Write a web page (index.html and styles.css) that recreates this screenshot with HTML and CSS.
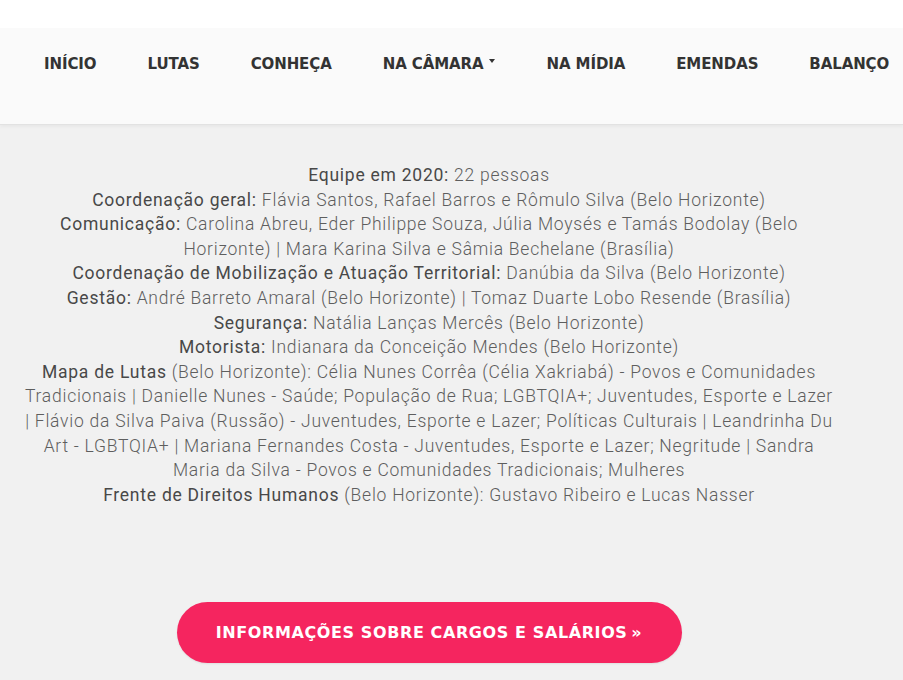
FILE: index.html
```html
<!DOCTYPE html>
<html lang="pt-BR">
<head>
<meta charset="utf-8">
<title>Equipe</title>
<link rel="stylesheet" href="styles.css">
</head>
<body>
<div class="topband"></div>
<header class="navbar">
  <nav class="menu">
    <a class="menu-item" href="#">INÍCIO</a>
    <a class="menu-item" href="#">LUTAS</a>
    <a class="menu-item" href="#">CONHEÇA</a>
    <a class="menu-item dropdown" href="#">NA CÂMARA<span class="caret"></span></a>
    <a class="menu-item" href="#">NA MÍDIA</a>
    <a class="menu-item" href="#">EMENDAS</a>
    <a class="menu-item" href="#">BALANÇO</a>
  </nav>
</header>
<main class="main">
  <div class="team">
    <p><strong>Equipe em 2020:</strong> 22 pessoas</p>
    <p><strong>Coordenação geral:</strong> Flávia Santos, Rafael Barros e Rômulo Silva (Belo Horizonte)</p>
    <p><strong>Comunicação:</strong> Carolina Abreu, Eder Philippe Souza, Júlia Moysés e Tamás Bodolay (Belo<br>Horizonte) | Mara Karina Silva e Sâmia Bechelane (Brasília)</p>
    <p><strong>Coordenação de Mobilização e Atuação Territorial:</strong> Danúbia da Silva (Belo Horizonte)</p>
    <p><strong>Gestão:</strong> André Barreto Amaral (Belo Horizonte) | Tomaz Duarte Lobo Resende (Brasília)</p>
    <p><strong>Segurança:</strong> Natália Lanças Mercês (Belo Horizonte)</p>
    <p><strong>Motorista:</strong> Indianara da Conceição Mendes (Belo Horizonte)</p>
    <p><strong>Mapa de Lutas</strong> (Belo Horizonte): Célia Nunes Corrêa (Célia Xakriabá) - Povos e Comunidades<br>Tradicionais | Danielle Nunes - Saúde; População de Rua; LGBTQIA+; Juventudes, Esporte e Lazer<br>| Flávio da Silva Paiva (Russão) - Juventudes, Esporte e Lazer; Políticas Culturais | Leandrinha Du<br>Art - LGBTQIA+ | Mariana Fernandes Costa - Juventudes, Esporte e Lazer; Negritude | Sandra<br>Maria da Silva - Povos e Comunidades Tradicionais; Mulheres</p>
    <p><strong>Frente de Direitos Humanos</strong> (Belo Horizonte): Gustavo Ribeiro e Lucas Nasser</p>
  </div>
  <div class="actions">
    <a class="btn" href="#">INFORMAÇÕES SOBRE CARGOS E SALÁRIOS&thinsp;»</a>
  </div>
</main>
</body>
</html>
```

FILE: styles.css
```css
* { box-sizing: border-box; }
html, body {
  margin: 0;
  padding: 0;
  background: #f1f1f1;
}
body {
  width: 903px;
  height: 680px;
  overflow: hidden;
}
.topband {
  height: 28px;
  background: #ffffff;
}
.navbar {
  height: 97px;
  background: #fafafa;
  border-bottom: 1px solid #e2e2e2;
  box-shadow: 0 2px 3px rgba(0,0,0,0.04);
}
.menu {
  display: flex;
  gap: 51px;
  padding: 26px 0 0 44px;
  font-family: "DejaVu Sans", sans-serif;
  font-weight: 700;
  font-size: 15px;
  line-height: 20px;
  letter-spacing: -0.1px;
}
.menu-item {
  color: #333333;
  text-decoration: none;
  white-space: nowrap;
  display: flex;
  align-items: center;
}
.caret {
  display: inline-block;
  width: 0;
  height: 0;
  margin-left: 6px;
  margin-top: -6px;
  border-left: 3.5px solid transparent;
  border-right: 3.5px solid transparent;
  border-top: 4px solid #333;
}
.main {
  width: 858px;
  padding-top: 38px;
}
.team {
  font-family: Roboto, "Liberation Sans", sans-serif;
  font-weight: 300;
  font-size: 17.5px;
  line-height: 24.6px;
  letter-spacing: 0.75px;
  color: #5e5e5e;
  text-align: center;
  white-space: nowrap;
}
.team p {
  margin: 0;
}
.team strong {
  font-weight: 400;
  color: #484848;
}
.actions {
  display: flex;
  justify-content: center;
  padding-top: 95px;
}
.btn {
  display: flex;
  align-items: center;
  justify-content: center;
  width: 505px;
  height: 61px;
  border-radius: 31px;
  background: #f5255f;
  color: #ffffff;
  text-decoration: none;
  font-family: "DejaVu Sans", sans-serif;
  font-weight: 700;
  font-size: 16px;
  letter-spacing: 0.6px;
  box-shadow: 0 1px 2px rgba(0,0,0,0.08);
}
```
